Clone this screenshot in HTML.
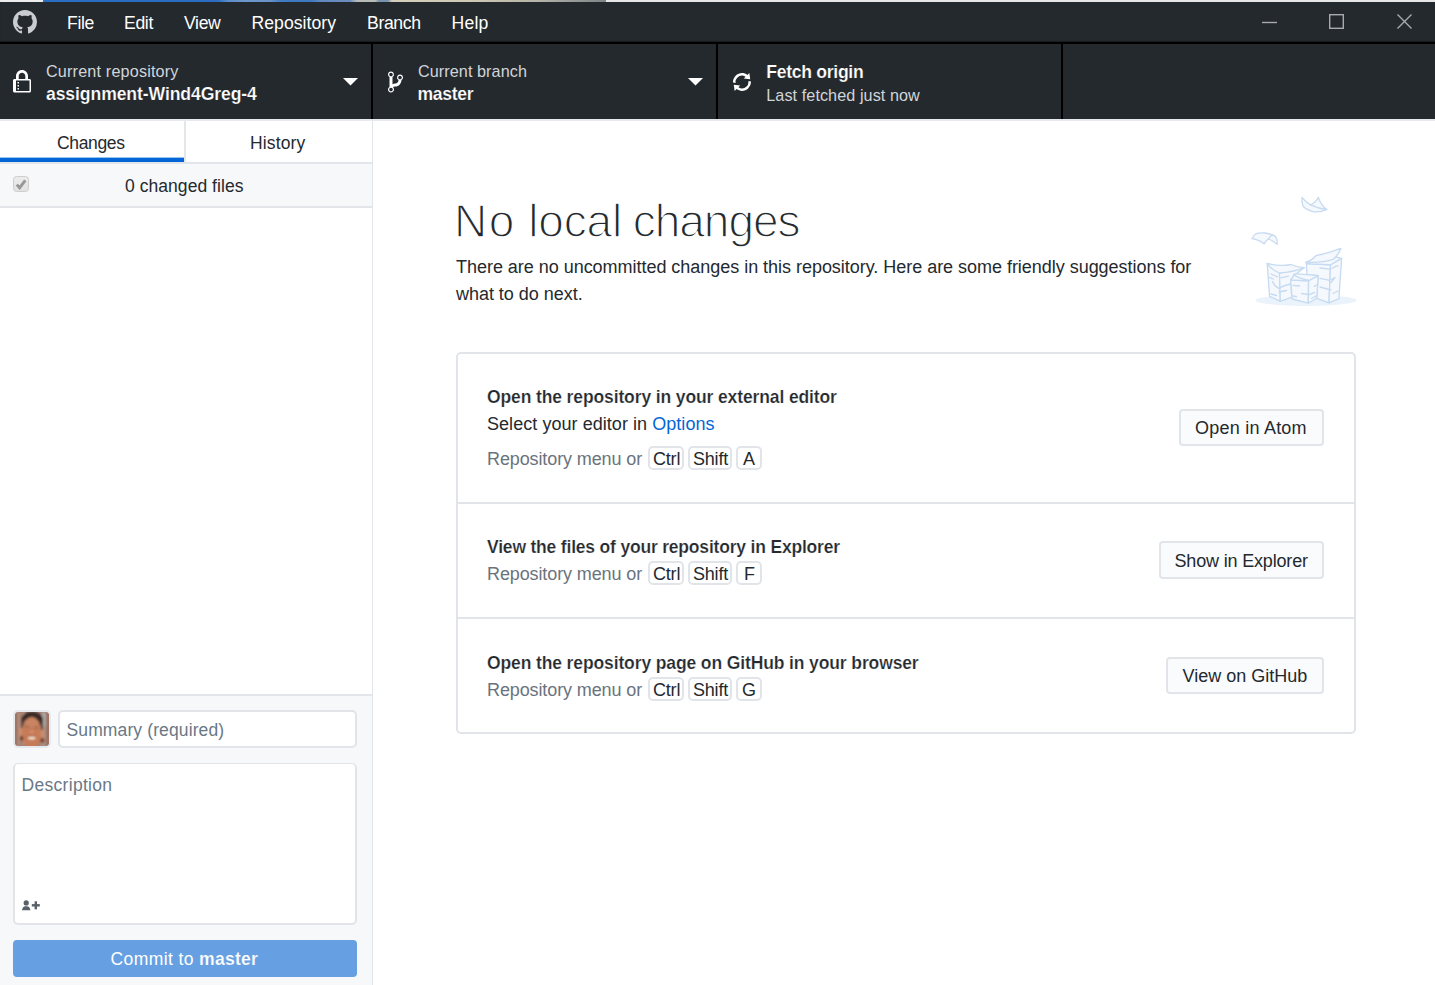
<!DOCTYPE html>
<html lang="en">
<head>
<meta charset="utf-8">
<title>GitHub Desktop</title>
<style>
*{box-sizing:border-box;margin:0;padding:0}
html,body{width:1435px;height:985px;overflow:hidden;background:#fff}
body{font-family:"Liberation Sans",sans-serif;font-size:17.5px;color:#24292e;position:relative;letter-spacing:-0.35px}
.abs{position:absolute}
.t{position:absolute;white-space:nowrap;line-height:1}
#topstrip{left:0;top:0;width:1435px;height:3px;background:linear-gradient(90deg,#ededed 0,#ededed 43px,#2a6fc4 43.5px,#2a6dc2 218px,#5d8cc9 228px,#6d97cc 245px,#6a93c8 270px,#3f7ac2 282px,#3f79c0 312px,#6088bf 320px,#6b8ebd 350px,#b5bab7 357px,#b8bbb5 375px,#7893ab 379px,#7893ab 388px,#d5cebb 392px,#cfc8b5 470px,#b4b3a6 540px,#7c8587 605.5px,#e6e6e6 606px,#e6e6e6 1435px)}
#titlebar{left:0;top:2px;width:1435px;height:40px;background:#24292e;box-shadow:0 -1px 1px rgba(0,0,0,.35) inset}
#tbline{left:0;top:42px;width:1435px;height:2px;background:#000}
#toolbar{left:0;top:44px;width:1435px;height:75px;background:#24292e}
.menu{color:#fff;top:15px;font-size:17.6px}
.vdiv{position:absolute;top:44px;width:2px;height:75px;background:#000}
.tl{color:#d1d5da;font-size:16.2px}
.tb{color:#fff;font-weight:bold;font-size:17.2px;-webkit-text-stroke:0.200px #24292e}
#sidebar{left:0;top:119px;width:373px;height:866px;background:#fff;border-right:1px solid #e1e4e8}
#main{left:373px;top:119px;width:1062px;height:866px;background:#fff}

#tabs{left:0;top:119px;width:372px;height:45px;background:#fff;border-bottom:2px solid #e2e5e9}
#topline{left:0;top:119px;width:1435px;height:2px;background:#e6e9ed;z-index:5}
#tabsel{left:0;top:158px;width:184px;height:4px;background:#0366d6;box-shadow:0 -1px 0 rgba(3,102,214,.4)}
#tabdiv{left:184px;top:121px;width:2px;height:41px;background:#e4e7ea}
#cfh{left:0;top:164px;width:372px;height:44px;background:#f6f8fa;border-bottom:2px solid #e2e5e9}
#cbx{left:13px;top:176px;width:16px;height:16px;border:1px solid #cdcdcd;border-radius:3.500px;background:linear-gradient(#ececec,#e2e2e2)}
#commit{left:0;top:694px;width:372px;height:291px;background:#f6f8fa;border-top:2px solid #e2e5e9}
#avatar{left:13px;top:710px;width:38px;height:38px;border:2px solid #e6e9ed;border-radius:5px;background:#fff;overflow:hidden}
#summary{left:58px;top:710px;width:299px;height:37.500px;border:2px solid #e1e4e8;border-radius:5px;background:#fff}
#desc{left:13px;top:763px;width:344px;height:162px;border:2px solid #e1e4e8;border-top-width:1px;border-radius:5px;background:#fff}
.ph{color:#6a7886}
#cbtn{left:13px;top:940px;width:344px;height:37px;border-radius:4px;background:#66a0e2}

h1{position:absolute;left:454px;top:198px;font-size:46px;font-weight:normal;line-height:1;white-space:nowrap;letter-spacing:-0.550px;color:#24292e;-webkit-text-stroke:1.400px #fff}
#para{left:456px;top:253.500px;width:780px;line-height:27px;font-size:18px;letter-spacing:-0.030px}
#card{left:456px;top:352px;width:900px;height:382px;border:2px solid #e1e4e8;border-radius:5px;background:#fff}
.hr{position:absolute;left:458px;width:896px;height:2px;background:#e1e4e8}
.b{font-weight:bold;font-size:17.500px;letter-spacing:-0.120px;-webkit-text-stroke:0.200px #fff}
.g{color:#6a737d}
.kbd{position:absolute;height:23.500px;border:2px solid #e1e4e8;border-radius:5px;background:#fff}
.btn{position:absolute;height:36.500px;border:2px solid #e1e4e8;border-radius:4px;background:#fafbfc}
</style>
</head>
<body>
<div id="topstrip" class="abs"></div>
<div id="titlebar" class="abs"></div>
<div id="tbline" class="abs"></div>
<div id="toolbar" class="abs"></div>

<!-- title bar -->
<svg class="abs" id="octo" style="left:13px;top:10px" width="24" height="24" viewBox="0 0 16 16"><path fill="#c9cdd1" fill-rule="evenodd" d="M8 0C3.58 0 0 3.58 0 8c0 3.54 2.29 6.53 5.47 7.59.4.07.55-.17.55-.38 0-.19-.01-.82-.01-1.49-2.01.37-2.53-.49-2.69-.94-.09-.23-.48-.94-.82-1.13-.28-.15-.68-.52-.01-.53.63-.01 1.08.58 1.23.82.72 1.21 1.87.87 2.33.66.07-.52.28-.87.51-1.07-1.78-.2-3.64-.89-3.64-3.95 0-.87.31-1.59.82-2.15-.08-.2-.36-1.02.08-2.12 0 0 .67-.21 2.2.82.64-.18 1.32-.27 2-.27.68 0 1.36.09 2 .27 1.53-1.04 2.2-.82 2.2-.82.44 1.1.16 1.92.08 2.12.51.56.82 1.27.82 2.15 0 3.07-1.87 3.75-3.65 3.95.29.25.54.73.54 1.48 0 1.07-.01 1.93-.01 2.2 0 .21.15.46.55.38A8.013 8.013 0 0 0 16 8c0-4.42-3.58-8-8-8z"/></svg>
<span class="t menu" id="m1" style="left:67px">File</span>
<span class="t menu" id="m2" style="left:124px">Edit</span>
<span class="t menu" id="m3" style="left:184px">View</span>
<span class="t menu" id="m4" style="left:251.500px;letter-spacing:0.050px">Repository</span>
<span class="t menu" id="m5" style="left:367px">Branch</span>
<span class="t menu" id="m6" style="left:451.500px;letter-spacing:0.200px">Help</span>
<svg class="abs" style="left:1255px;top:8px" width="170" height="30" viewBox="0 0 170 30"><g stroke="#a8abae" stroke-width="1.4" fill="none"><path d="M7 14.5h15"/><rect x="74.7" y="6.7" width="13.6" height="13.6"/><path d="M142.5 6.5l14 14M156.5 6.5l-14 14"/></g></svg>

<!-- toolbar -->
<div class="vdiv" style="left:371px"></div>
<div class="vdiv" style="left:716px"></div>
<div class="vdiv" style="left:1061px"></div>

<svg class="abs" id="lock" style="left:13px;top:70px" width="18" height="24" viewBox="0 0 12 16"><path fill="#fff" fill-rule="evenodd" d="M4 13H3v-1h1v1zm8-6v7c0 .55-.45 1-1 1H1c-.55 0-1-.45-1-1V7c0-.55.45-1 1-1h1V4c0-2.200 1.800-4 4-4s4 1.800 4 4v2h1c.55 0 1 .45 1 1zM3.800 6h4.410V4c0-1.220-.980-2.200-2.200-2.200-1.220 0-2.200.980-2.200 2.200v2H3.800zM11 7H2v7h9V7zM4 8H3v1h1V8zm0 2H3v1h1v-1z"/></svg>
<span class="t tl" id="r1" style="left:46px;top:62.600px;letter-spacing:0.170px">Current repository</span>
<span class="t tb" id="r2" style="left:46px;top:85.500px;font-size:17.600px;letter-spacing:-0.100px">assignment-Wind4Greg-4</span>
<svg class="abs" style="left:343px;top:78px" width="15" height="8" viewBox="0 0 15 8"><path fill="#fff" d="M0 0h15L7.500 7.500z"/></svg>

<svg class="abs" id="branch" style="left:388px;top:69.500px" width="15" height="24" viewBox="0 0 10 16"><path fill="#fff" fill-rule="evenodd" d="M10 5c0-1.110-.89-2-2-2a1.993 1.993 0 0 0-1 3.720v.3c-.02.520-.23.980-.63 1.380-.4.400-.86.610-1.380.630-.83.020-1.480.160-2 .450V4.720a1.993 1.993 0 0 0-1-3.720C.880 1 0 1.890 0 3a2 2 0 0 0 1 1.720v6.560c-.59.350-1 .990-1 1.720 0 1.110.89 2 2 2 1.110 0 2-.89 2-2 0-.53-.2-1-.53-1.360.09-.6.480-.410.590-.470.250-.110.560-.170.940-.170 1.050-.05 1.950-.450 2.750-1.250S8.950 7.770 9 6.730h-.02C9.590 6.370 10 5.730 10 5zM2 1.800c.66 0 1.200.55 1.200 1.200 0 .65-.55 1.200-1.200 1.200C1.350 4.200.8 3.650.8 3c0-.65.550-1.200 1.200-1.200zm0 12.410c-.66 0-1.200-.55-1.200-1.200 0-.65.550-1.200 1.200-1.200.65 0 1.200.55 1.200 1.200 0 .65-.55 1.200-1.200 1.200zm6-8c-.66 0-1.200-.55-1.200-1.200 0-.65.550-1.200 1.200-1.200.65 0 1.200.55 1.200 1.200 0 .65-.55 1.200-1.200 1.200z"/></svg>
<span class="t tl" id="b1" style="left:418px;top:62.600px;letter-spacing:0.070px">Current branch</span>
<span class="t tb" id="b2" style="left:417.500px;top:85.500px;font-size:17.600px;letter-spacing:-0.300px">master</span>
<svg class="abs" style="left:688px;top:78px" width="15" height="8" viewBox="0 0 15 8"><path fill="#fff" d="M0 0h15L7.500 7.500z"/></svg>

<svg class="abs" id="sync" style="left:733px;top:70px" width="18" height="24" viewBox="0 0 12 16"><path fill="#fff" fill-rule="evenodd" d="M10.240 7.400a4.150 4.150 0 0 1-1.200 3.600 4.346 4.346 0 0 1-5.410.54L4.800 10.400.5 9.800l.6 4.200 1.310-1.260c2.360 1.740 5.700 1.570 7.840-.54a5.876 5.876 0 0 0 1.740-4.460l-1.750-.34zM2.960 5a4.346 4.346 0 0 1 5.410-.54L7.200 5.600l4.300.6-.6-4.200-1.310 1.260c-2.360-1.740-5.700-1.570-7.850.54C.5 5.030-.06 6.650.010 8.260l1.750.35A4.170 4.170 0 0 1 2.960 5z"/></svg>
<span class="t tb" id="f1" style="left:766.300px;top:63.500px;font-size:17.600px;letter-spacing:-0.300px">Fetch origin</span>
<span class="t tl" id="f2" style="left:766.300px;top:87.200px;letter-spacing:0.070px">Last fetched just now</span>

<div id="sidebar" class="abs"></div>
<div id="tabs" class="abs"></div>
<div id="topline" class="abs"></div>
<div id="tabsel" class="abs"></div>
<div id="tabdiv" class="abs"></div>
<span class="t" id="tb1" style="left:57px;top:135px">Changes</span>
<span class="t" id="tb2" style="left:250px;top:135px;letter-spacing:0.150px">History</span>
<div id="cfh" class="abs"></div>
<div id="cbx" class="abs"><svg style="position:absolute;left:1px;top:1px" width="12" height="12" viewBox="0 0 12 12"><path d="M1.800 6.600L4.600 9.800L10.300 2.300" fill="none" stroke="#979797" stroke-width="2.900"/></svg></div>
<span class="t" id="cf" style="left:125px;top:178px;letter-spacing:0.050px">0 changed files</span>
<div id="commit" class="abs"></div>
<div id="avatar" class="abs"><svg width="34" height="34" viewBox="0 0 34 34" style="display:block">
<defs><filter id="bl" x="-20%" y="-20%" width="140%" height="140%"><feGaussianBlur stdDeviation="0.9"/></filter><clipPath id="cp"><rect width="34" height="34" rx="2.500"/></clipPath></defs>
<g clip-path="url(#cp)"><rect width="34" height="34" fill="#a67f70"/>
<g filter="url(#bl)">
<rect x="0" y="0" width="2.500" height="34" fill="#9a6c5c"/><rect x="2.500" y="0" width="2.500" height="34" fill="#b59082"/><rect x="5" y="0" width="2" height="34" fill="#a07868"/><rect x="7" y="0" width="2" height="34" fill="#b48e80"/>
<rect x="27" y="0" width="4.200" height="15" fill="#a9a6a4"/><rect x="25.500" y="14" width="5" height="20" fill="#a8958c"/><rect x="31.200" y="0" width="2.800" height="34" fill="#9c6a58"/>
<ellipse cx="17.100" cy="8" rx="11" ry="8.300" fill="#372925"/>
<rect x="6.300" y="8" width="2.600" height="8" fill="#4e3f3a"/><rect x="25.600" y="9" width="2.400" height="9" fill="#4e3f3a"/>
<ellipse cx="16.700" cy="21" rx="9.800" ry="16" fill="#c67b58"/>
<ellipse cx="16.500" cy="10.500" rx="7.200" ry="4" fill="#c98462"/>
<ellipse cx="5.600" cy="20" rx="1.700" ry="4.400" fill="#cd8b6a"/><ellipse cx="27.200" cy="22" rx="1.800" ry="4.200" fill="#cd8b6a"/>
<ellipse cx="6.600" cy="26.300" rx="1.800" ry="2.400" fill="#6e3424"/><ellipse cx="27.300" cy="28.500" rx="2" ry="2.800" fill="#7e3e2a"/>
<ellipse cx="12" cy="14.600" rx="1.900" ry="0.800" fill="#8d685e"/><ellipse cx="21.300" cy="15.600" rx="1.900" ry="0.800" fill="#8d685e"/>
<ellipse cx="16.900" cy="20" rx="2" ry="1.600" fill="#d8916f"/>
<ellipse cx="16.700" cy="24.300" rx="4.600" ry="0.900" fill="#b2604a"/>
<ellipse cx="16.700" cy="26" rx="3.800" ry="1.300" fill="#f4ead2"/>
</g></g></g></svg></div>
<div id="summary" class="abs"></div>
<span class="t ph" id="sm" style="left:66.500px;top:722px;letter-spacing:0.120px">Summary (required)</span>
<div id="desc" class="abs"></div>
<span class="t ph" id="ds" style="left:21.500px;top:777px;letter-spacing:0.300px">Description</span>
<svg class="abs" id="coauth" style="left:22px;top:899.500px" width="18" height="11" viewBox="0 0 18 11"><g fill="#586069"><circle cx="4.200" cy="2.900" r="2.600"/><path d="M0 10.200c.2-2.300 1.500-3.400 2.900-3.900h2.600c1.400.5 2.700 1.600 2.900 3.900z"/><rect x="9.800" y="4.100" width="8" height="2.400"/><rect x="12.600" y="1.300" width="2.400" height="8"/></g></svg>
<div id="cbtn" class="abs"></div>
<span class="t" id="ct" style="left:110.500px;top:951px;color:#fff;letter-spacing:0.400px">Commit to <b id="ctb" style="font-size:17.600px;letter-spacing:0.230px;-webkit-text-stroke:0.200px #66a0e2">master</b></span>
<div id="main" class="abs"></div>
<h1 id="h1"><span id="h1a" style="letter-spacing:1.600px">No</span> <span id="h1b" style="letter-spacing:-0.150px">local</span> <span id="h1c" style="letter-spacing:-1.050px;margin-left:-1.500px">changes</span></h1>
<div class="abs" id="para">There are no uncommitted changes in this repository. Here are some friendly suggestions for<br>what to do next.</div>
<svg class="abs" id="illo" style="left:1245px;top:190px" width="120" height="120" viewBox="1245 190 120 120">
<ellipse cx="1306" cy="300.400" rx="50.500" ry="5.600" fill="#eaf2fb"/>
<g fill="#f5f8fc" stroke="#c6dbf1" stroke-width="1.300" stroke-linejoin="round" stroke-linecap="round">
<!-- right pile -->
<path d="M1306.300 263.500L1330.500 264.800L1329 302.900L1316.700 298.300L1318.200 275.600L1307 274.700z"/>
<path d="M1330.500 264.800L1341.600 258.400L1338.900 298.600L1329 302.900z"/>
<path d="M1306.300 263.500L1330.500 264.800L1341.600 258.400L1334 256.500z"/>
<path d="M1305.600 262.200C1310 261 1313 259 1315.900 255.700C1325 254 1333 251.500 1340.800 248.400C1339 253 1336.500 256.500 1333.600 259.200C1325 262 1315 262.800 1305.600 262.200z"/>
<path fill="none" d="M1320 268L1329.500 269.200M1332 268.500C1334 267 1336 266 1338 265.600M1320 278.300L1329.800 280.300L1335 277.500L1331 282.500M1320 287L1331 290M1333 293.500L1338 291"/>
<!-- left pile -->
<path d="M1267.200 263.400L1269.500 296.300L1280.300 301.300L1279.500 273z"/>
<path d="M1279.500 273L1280.300 301.300L1291.800 297.100L1290.600 280L1296 274L1304.400 267.600z"/>
<path d="M1267.200 263.400C1275 265.500 1284 266 1291 264.500C1295 266.500 1300 267.500 1304.400 267.600C1296 271 1288 272.500 1279.500 273C1274 271 1270 267.500 1267.200 263.400z"/>
<path fill="none" d="M1271 274L1277.500 276.800M1269.500 277.500L1273.500 279M1281 277.800L1288.500 276.200M1272.500 281.500C1274 285 1276 287 1278.500 288.300C1282 286.500 1286 285 1290.500 284M1279 292L1286.500 290.500M1271 294L1276.500 295.500"/>
<!-- middle pile -->
<path d="M1290.600 280L1292.200 299L1308.300 303.200L1308.600 280.800z"/>
<path d="M1308.600 280.800L1308.300 303.200L1316.700 298.300L1318.200 275.600z"/>
<path d="M1290.600 280L1295.200 273.700L1318.200 275.600L1308.600 280.800z"/>
<path fill="none" d="M1293.500 274.500C1298 278 1303 279.500 1308.600 280.200M1293 285.300L1299.500 286M1301.500 293.500L1308 294.500M1293 296L1296.500 296.700M1314 286.500L1317 284.800M1308.800 294.800L1314.500 292.300M1311.500 298.500L1316 296"/>
<!-- flying papers -->
<path d="M1302 197.300C1304.500 200.500 1307.500 203.200 1310.500 204.900C1314 203.500 1316.800 200.800 1318.300 197.300C1320 202.500 1323 206.800 1326.700 209.500C1322.500 211.500 1318 212.200 1313.700 211.900C1309.500 210.800 1305.800 209 1303.200 206.500C1301.800 203.500 1301.600 200.300 1302 197.300z"/>
<path fill="none" d="M1310.500 204.900C1316 207.500 1321 209 1326.700 209.500"/>
<path d="M1252 238.700C1253 236.300 1254.300 234.600 1256 233.700C1259 232.700 1262 232.600 1265 233C1269 233.500 1273 234.800 1275.500 236.600C1277 238.800 1277.500 241.500 1277.200 244.400C1274.500 241.800 1271.500 240 1268.200 239C1266.500 240.300 1265.200 242 1264.200 243.900C1260.500 241 1256.500 239.300 1252 238.700z"/>
<path fill="none" d="M1268.200 239C1269.500 236.800 1271 235.500 1273 234.800"/>
</g></svg>
<div id="card" class="abs"></div>
<div class="hr" style="top:502px"></div>
<div class="hr" style="top:617px"></div>

<span class="t b" id="c1a" style="left:487px;top:389px">Open the repository in your external editor</span>
<span class="t" id="c1b" style="left:487px;top:415px;font-size:18px;letter-spacing:0.050px">Select your editor in <span id="opt" style="color:#0366d6">Options</span></span>
<span class="t g" id="c1c" style="font-size:18px;letter-spacing:-0.110px;left:487px;top:450px">Repository menu or</span>
<div class="kbd" style="left:648px;top:446px;width:36px"></div><span class="t" id="k1a" style="font-size:18px;letter-spacing:-0.200px;left:653px;top:450px">Ctrl</span>
<div class="kbd" style="left:688px;top:446px;width:44.400px"></div><span class="t" id="k1b" style="font-size:18px;letter-spacing:-0.200px;left:693px;top:450px">Shift</span>
<div class="kbd" style="left:736px;top:446px;width:26.400px"></div><span class="t" id="k1c" style="font-size:18px;letter-spacing:-0.200px;left:743px;top:450px">A</span>
<div class="btn" style="left:1179px;top:409px;width:145px;height:37px"></div><span class="t" id="bt1" style="left:1195px;top:419px;font-size:18px;letter-spacing:0.230px">Open in Atom</span>

<span class="t b" id="c2a" style="left:487px;top:539px;letter-spacing:-0.190px">View the files of your repository in Explorer</span>
<span class="t g" id="c2c" style="font-size:18px;letter-spacing:-0.110px;left:487px;top:565px">Repository menu or</span>
<div class="kbd" style="left:648px;top:561px;width:36px"></div><span class="t" id="k2a" style="font-size:18px;letter-spacing:-0.200px;left:653px;top:565px">Ctrl</span>
<div class="kbd" style="left:688px;top:561px;width:44.400px"></div><span class="t" id="k2b" style="font-size:18px;letter-spacing:-0.200px;left:693px;top:565px">Shift</span>
<div class="kbd" style="left:736px;top:561px;width:26.400px"></div><span class="t" id="k2c" style="font-size:18px;letter-spacing:-0.200px;left:744px;top:565px">F</span>
<div class="btn" style="left:1159px;top:541px;width:165px;height:37.500px"></div><span class="t" id="bt2" style="left:1174.500px;top:552px;font-size:18px;letter-spacing:-0.170px">Show in Explorer</span>

<span class="t b" id="c3a" style="left:487px;top:655px">Open the repository page on GitHub in your browser</span>
<span class="t g" id="c3c" style="font-size:18px;letter-spacing:-0.110px;left:487px;top:681px">Repository menu or</span>
<div class="kbd" style="left:648px;top:677px;width:36px"></div><span class="t" id="k3a" style="font-size:18px;letter-spacing:-0.200px;left:653px;top:681px">Ctrl</span>
<div class="kbd" style="left:688px;top:677px;width:44.400px"></div><span class="t" id="k3b" style="font-size:18px;letter-spacing:-0.200px;left:693px;top:681px">Shift</span>
<div class="kbd" style="left:736px;top:677px;width:26.400px"></div><span class="t" id="k3c" style="font-size:18px;letter-spacing:-0.200px;left:742px;top:681px">G</span>
<div class="btn" style="left:1166px;top:657px;width:158px;height:37px"></div><span class="t" id="bt3" style="left:1182.500px;top:667px;font-size:18px;letter-spacing:0.010px">View on GitHub</span>
</body>
</html>
